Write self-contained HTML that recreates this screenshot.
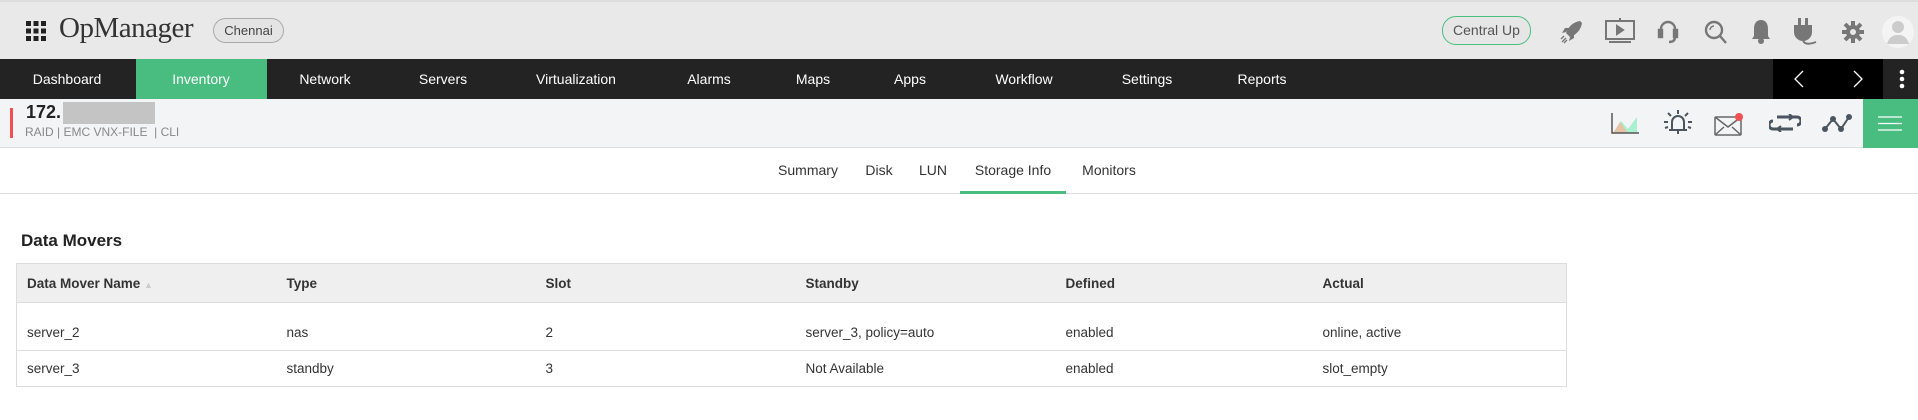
<!DOCTYPE html>
<html><head><meta charset="utf-8"><style>
*{margin:0;padding:0;box-sizing:border-box}
body{width:1918px;height:420px;overflow:hidden;background:#fff;font-family:"Liberation Sans",sans-serif;color:#333;position:relative}
.a{position:absolute}
#hdr{left:0;top:0;width:1918px;height:59px;background:#e9e9ea;border-top:2px solid #dcdcdc}
#nav{left:0;top:59px;width:1918px;height:40px;background:#232323}
.ni{position:absolute;top:0;height:40px;line-height:40px;color:#fff;font-size:14px;transform:translateX(-50%);white-space:nowrap}
#dev{left:0;top:99px;width:1918px;height:49px;background:#f3f4f6;border-bottom:1px solid #ddd}
#tabs{left:0;top:148px;width:1918px;height:46px;border-bottom:1px solid #ddd}
.tb{position:absolute;top:14px;font-size:14px;color:#333;transform:translateX(-50%);white-space:nowrap}
table{position:absolute;left:16px;top:263px;width:1551px;border-collapse:collapse;border:1px solid #ddd;font-size:13.5px}
th{background:#efefef;height:39px;text-align:left;font-weight:bold;color:#333;padding-left:10px;border-bottom:1px solid #ddd}
td{padding-left:10px;color:#333;border-bottom:1px solid #ddd}
</style></head><body>
<div id="hdr" class="a">
 <svg class="a" style="left:26px;top:19px" width="20" height="20" viewBox="0 0 20 20" fill="#222">
  <rect x="0" y="0" width="5" height="5"/><rect x="7.5" y="0" width="5" height="5"/><rect x="15" y="0" width="5" height="5"/>
  <rect x="0" y="7.5" width="5" height="5"/><rect x="7.5" y="7.5" width="5" height="5"/><rect x="15" y="7.5" width="5" height="5"/>
  <rect x="0" y="15" width="5" height="5"/><rect x="7.5" y="15" width="5" height="5"/><rect x="15" y="15" width="5" height="5"/></svg>
 <div class="a" style="left:59px;top:10px;font-family:'Liberation Serif',serif;font-size:29px;color:#333;letter-spacing:-0.5px">OpManager</div>
 <div class="a" style="left:213px;top:16px;width:71px;height:25px;border:1px solid #aaa;border-radius:13px;font-size:13px;line-height:23px;text-align:center;color:#444;background:#e4e4e4">Chennai</div>
 <div class="a" style="left:1442px;top:14px;width:89px;height:29px;border:1px solid #4bbf7f;border-radius:14px;font-size:14px;line-height:27px;text-align:center;color:#555;background:#e6e6e6">Central Up</div>
 <svg class="a" style="left:1560px;top:18px" width="22" height="24" viewBox="0 0 22 24" fill="#777"><path d="M20 1C13 2 8 7 6 13l4 4c6-2 11-7 12-14z"/><path d="M6 12l-4 1 3-5h4zM10 17l-1 4 5-3v-4z"/><path d="M2 22l4-4M4 23l3-3M1 19l3-3" stroke="#777" stroke-width="1.4"/></svg>
 <svg class="a" style="left:1605px;top:16px" width="30" height="28" viewBox="0 0 30 28" fill="none" stroke="#777" stroke-width="2"><rect x="1" y="3" width="28" height="18"/><path d="M12 8v8l6-4z" fill="#777"/><path d="M15 0v3M4 24h22" /></svg>
 <svg class="a" style="left:1657px;top:17px" width="22" height="26" viewBox="0 0 22 26" fill="none" stroke="#777" stroke-width="2.4"><path d="M4 14V10a7 7 0 0 1 14 0v4"/><rect x="2" y="11" width="3" height="7" fill="#777"/><rect x="17" y="11" width="3" height="7" fill="#777"/><path d="M18 18c0 4-3 5-6 5"/></svg>
 <svg class="a" style="left:1704px;top:17px" width="24" height="26" viewBox="0 0 24 26" fill="none" stroke="#777" stroke-width="2.4"><circle cx="10" cy="11" r="8"/><path d="M16 17l6 7"/><path d="M6 11a4 4 0 0 1 4-4" stroke-width="1.5"/></svg>
 <svg class="a" style="left:1751px;top:16px" width="20" height="27" viewBox="0 0 20 27" fill="#777"><path d="M10 2c-5 0-7 4-7 9v7l-2 3h18l-2-3v-7c0-5-2-9-7-9z"/><circle cx="10" cy="23" r="3"/></svg>
 <svg class="a" style="left:1793px;top:15px" width="24" height="30" viewBox="0 0 24 30" fill="#777"><rect x="5" y="1" width="3" height="7"/><rect x="12" y="1" width="3" height="7"/><path d="M1 8h18v7a9 9 0 0 1-18 0z"/><path d="M10 22c0 5 5 6 13 3" stroke="#777" stroke-width="2" fill="none"/></svg>
 <svg class="a" style="left:1841px;top:18px" width="24" height="24" viewBox="0 0 24 24" fill="#777"><circle cx="12" cy="12" r="7"/><g stroke="#777" stroke-width="4"><path d="M12 1v22M1 12h22M4 4l16 16M20 4L4 20"/></g><circle cx="12" cy="12" r="3" fill="#e9e9ea"/></svg>
 <svg class="a" style="left:1882px;top:13px" width="32" height="34" viewBox="0 0 32 34"><circle cx="16" cy="17" r="16" fill="#f4f4f4"/><circle cx="16" cy="12" r="6" fill="#ccc"/><path d="M5 29c2-7 6-9 11-9s9 2 11 9z" fill="#ccc"/></svg>
</div>
<div id="nav" class="a">
 <div class="a" style="left:136px;top:0;width:131px;height:40px;background:#48bd7f"></div>
 <div class="ni" style="left:67px">Dashboard</div>
 <div class="ni" style="left:201px">Inventory</div>
 <div class="ni" style="left:325px">Network</div>
 <div class="ni" style="left:443px">Servers</div>
 <div class="ni" style="left:576px">Virtualization</div>
 <div class="ni" style="left:709px">Alarms</div>
 <div class="ni" style="left:813px">Maps</div>
 <div class="ni" style="left:910px">Apps</div>
 <div class="ni" style="left:1024px">Workflow</div>
 <div class="ni" style="left:1147px">Settings</div>
 <div class="ni" style="left:1262px">Reports</div>
 <div class="a" style="left:1773px;top:0;width:110px;height:40px;background:#000"></div>
 <svg class="a" style="left:1793px;top:11px" width="12" height="18" viewBox="0 0 12 18" fill="none" stroke="#fff" stroke-width="1.3"><path d="M10 1L2 9l8 8"/></svg>
 <svg class="a" style="left:1852px;top:11px" width="12" height="18" viewBox="0 0 12 18" fill="none" stroke="#fff" stroke-width="1.3"><path d="M2 1l8 8-8 8"/></svg>
 <svg class="a" style="left:1898px;top:10px" width="8" height="20" viewBox="0 0 8 20" fill="#fff"><circle cx="4" cy="3" r="2.3"/><circle cx="4" cy="10" r="2.3"/><circle cx="4" cy="17" r="2.3"/></svg>
</div>
<div id="dev" class="a">
 <div class="a" style="left:10px;top:9px;width:3px;height:30px;background:#f05050"></div>
 <div class="a" style="left:26px;top:3px;font-size:18px;font-weight:bold;color:#222">172.</div>
 <div class="a" style="left:63px;top:3px;width:92px;height:22px;background:#c4c4c4"></div>
 <div class="a" style="left:25px;top:26px;font-size:12px;color:#888">RAID | EMC VNX-FILE &nbsp;| CLI</div>
 <svg class="a" style="left:1611px;top:14px" width="28" height="21" viewBox="0 0 28 21"><path d="M2 20L10 8l7 8 9-12v16z" fill="#a8f0d0"/><path d="M2 20l7-11 8 11z" fill="#f4b89a" opacity=".8"/><path d="M1 0v20h27" stroke="#555" stroke-width="1.5" fill="none"/></svg>
 <svg class="a" style="left:1663px;top:10px" width="30" height="28" viewBox="0 0 30 28" fill="none" stroke="#4a5560" stroke-width="2"><path d="M9 21v-8a6 6 0 0 1 12 0v8M6 21h18M15 21v4"/><path d="M15 1v4M5 4l3 3M25 4l-3 3M1 13h4M25 13h4M2 19l3-1M28 19l-3-1"/></svg>
 <svg class="a" style="left:1714px;top:13px" width="30" height="24" viewBox="0 0 30 24" fill="none" stroke="#666" stroke-width="1.5"><rect x="1" y="5" width="26" height="18" rx="1"/><path d="M1 5l13 10 13-10M1 23l9-8M27 23l-9-8"/><circle cx="25" cy="5" r="4" fill="#f05050" stroke="none"/></svg>
 <svg class="a" style="left:1769px;top:15px" width="32" height="18" viewBox="0 0 32 18" fill="none" stroke="#4a5560" stroke-width="3"><path d="M8 3h20a3 3 0 0 1 0 8"/><path d="M24 15H4a3 3 0 0 1 0-8"/><path d="M20 0l4 3-4 3M12 12l-4 3 4 3" stroke-width="2"/></svg>
 <svg class="a" style="left:1822px;top:14px" width="30" height="20" viewBox="0 0 30 20" fill="#4a5560"><path d="M3 16L11 6l8 10 8-12" stroke="#4a5560" stroke-width="2" fill="none"/><circle cx="3" cy="16" r="3"/><circle cx="11" cy="6" r="3"/><circle cx="19" cy="16" r="3"/><circle cx="27" cy="4" r="3"/></svg>
 <div class="a" style="left:1863px;top:0;width:55px;height:49px;background:#48bd7f"></div>
 <svg class="a" style="left:1878px;top:17px" width="24" height="15" viewBox="0 0 24 15" stroke="#fff" stroke-width="1.3"><path d="M0 1h24M0 7.5h24M0 14h24"/></svg>
</div>
<div id="tabs" class="a">
 <div class="tb" style="left:808px">Summary</div>
 <div class="tb" style="left:879px">Disk</div>
 <div class="tb" style="left:933px">LUN</div>
 <div class="tb" style="left:1013px">Storage Info</div>
 <div class="tb" style="left:1109px">Monitors</div>
 <div class="a" style="left:960px;top:43px;width:106px;height:3px;background:#48bd7f"></div>
</div>
<div class="a" style="left:21px;top:231px;font-size:17px;font-weight:bold;color:#222">Data Movers</div>
<table>
 <tr><th style="width:260px">Data Mover Name <span style="color:#ccc;font-size:9px">&#9650;</span></th><th style="width:259px">Type</th><th style="width:260px">Slot</th><th style="width:260px">Standby</th><th style="width:257px">Defined</th><th>Actual</th></tr>
 <tr style="height:48px"><td style="padding-top:12px">server_2</td><td style="padding-top:12px">nas</td><td style="padding-top:12px">2</td><td style="padding-top:12px">server_3, policy=auto</td><td style="padding-top:12px">enabled</td><td style="padding-top:12px">online, active</td></tr>
 <tr style="height:36px"><td>server_3</td><td>standby</td><td>3</td><td>Not Available</td><td>enabled</td><td>slot_empty</td></tr>
</table>
</body></html>
